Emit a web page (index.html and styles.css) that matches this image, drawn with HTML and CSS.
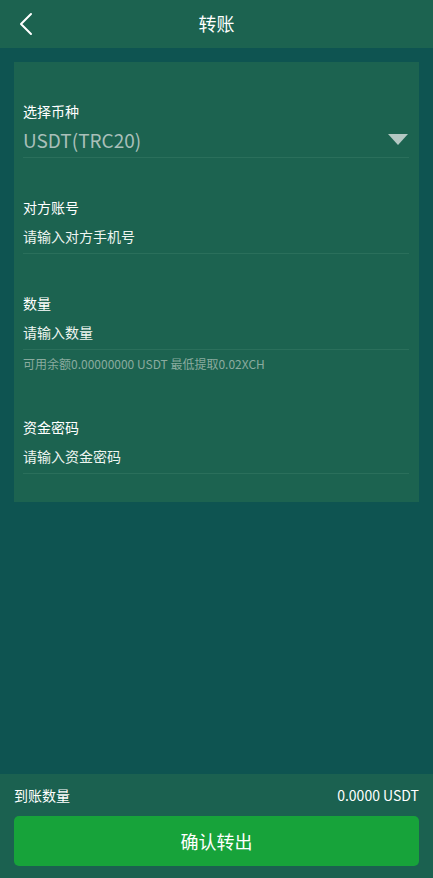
FILE: index.html
```html
<!DOCTYPE html>
<html lang="zh-CN">
<head>
<meta charset="utf-8">
<title>转账</title>
<link rel="stylesheet" href="styles.css">
</head>
<body>
<div class="page">
  <header class="topbar">
    <a class="back" href="#" aria-label="返回">
      <svg width="16" height="24" viewBox="0 0 16 24"><path d="M13 2 L3 12 L13 22" fill="none" stroke="#ffffff" stroke-width="2" stroke-linecap="round" stroke-linejoin="round"/></svg>
    </a>
    <h1 class="title">转账</h1>
  </header>
  <main class="main">
    <section class="card">
      <div class="group">
        <div class="label">选择币种</div>
        <div class="field select">
          <span class="value">USDT(TRC20)</span>
          <svg class="caret" width="20" height="11" viewBox="0 0 20 11"><path d="M0 0 H20 L10 11 Z" fill="#b3c8c3"/></svg>
        </div>
      </div>
      <div class="group">
        <div class="label">对方账号</div>
        <div class="field"><span class="placeholder">请输入对方手机号</span></div>
      </div>
      <div class="group">
        <div class="label">数量</div>
        <div class="field"><span class="placeholder">请输入数量</span></div>
        <div class="hint">可用余额0.00000000 USDT 最低提取0.02XCH</div>
      </div>
      <div class="group">
        <div class="label">资金密码</div>
        <div class="field"><span class="placeholder">请输入资金密码</span></div>
      </div>
    </section>
  </main>
  <footer class="footer">
    <div class="summary">
      <span>到账数量</span>
      <span>0.0000 USDT</span>
    </div>
    <button class="submit" type="button">确认转出</button>
  </footer>
</div>
</body>
</html>
```
FILE: styles.css
```css
* { box-sizing: border-box; }
html, body { margin: 0; padding: 0; }
body {
  font-family: "Noto Sans CJK SC", "Liberation Sans", sans-serif;
  background: #0e5451;
  color: #ffffff;
}
.page {
  display: flex;
  flex-direction: column;
  height: 100vh;
}
.topbar {
  height: 48px;
  flex: none;
  background: #1c6350;
  display: flex;
  align-items: center;
  justify-content: center;
  position: relative;
}
.back {
  position: absolute;
  left: 18px;
  top: 12px;
  display: flex;
}
.title {
  margin: 0;
  font-size: 18px;
  font-weight: normal;
  color: #ffffff;
  line-height: 24px;
  margin-top: -2px;
}
.main {
  flex: 1;
  padding: 14px 14px 0;
}
.card {
  background: #1c6350;
  padding: 40px 10px 28px 9px;
  display: flex;
  flex-direction: column;
  gap: 40px;
}
.label {
  font-size: 14px;
  line-height: 20px;
  height: 20px;
  color: #ffffff;
  margin-top: -1px;
  margin-bottom: 3px;
}
.field {
  height: 34px;
  padding-bottom: 2px;
  border-bottom: 1px solid #2a6f5b;
  display: flex;
  align-items: center;
}
.placeholder {
  font-size: 14px;
  color: #eef5f0;
}
.value {
  font-size: 19px;
  color: #a9bfb9;
  flex: 1;
}
.caret { margin-right: 1px; }
.hint {
  font-size: 12px;
  line-height: 16px;
  margin-top: 6px;
  padding-bottom: 6px;
  color: #8aab9f;
}
.footer {
  flex: none;
  background: #1b6150;
  padding: 5px 14px 12px;
}
.summary {
  height: 32px;
  display: flex;
  align-items: center;
  justify-content: space-between;
  font-size: 14px;
  color: #ffffff;
}
.submit {
  margin-top: 5px;
  width: 100%;
  height: 50px;
  border: none;
  border-radius: 5px;
  background: #17a33a;
  color: #ffffff;
  font-family: inherit;
  font-size: 18px;
}
```
